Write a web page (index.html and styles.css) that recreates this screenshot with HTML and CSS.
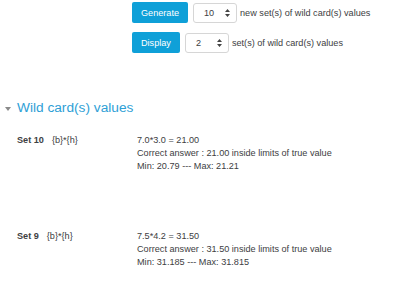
FILE: index.html
```html
<!DOCTYPE html>
<html>
<head>
<meta charset="utf-8">
<link rel="stylesheet" href="styles.css">
</head>
<body>
<div class="form">
  <div class="frow">
    <button class="btn">Generate</button>
    <div class="select"><span>10</span><svg class="arr" width="5" height="8" viewBox="0 0 5 8"><path d="M2.5 0 L5 3 L0 3 Z M0 5 L5 5 L2.5 8 Z" fill="#444"/></svg></div>
    <span class="flabel">new set(s) of wild card(s) values</span>
  </div>
  <div class="frow">
    <button class="btn">Display</button>
    <div class="select"><span>2</span><svg class="arr" width="5" height="8" viewBox="0 0 5 8"><path d="M2.5 0 L5 3 L0 3 Z M0 5 L5 5 L2.5 8 Z" fill="#444"/></svg></div>
    <span class="flabel">set(s) of wild card(s) values</span>
  </div>
</div>
<h3 class="section"><span class="caret"></span>Wild card(s) values</h3>
<div class="sets">
  <div class="set">
    <div class="setlabel"><b>Set 10</b>{b}*{h}</div>
    <div class="setvals">
      <div>7.0*3.0 = 21.00</div>
      <div>Correct answer : 21.00 inside limits of true value</div>
      <div>Min: 20.79 --- Max: 21.21</div>
    </div>
  </div>
  <div class="set">
    <div class="setlabel"><b>Set 9</b>{b}*{h}</div>
    <div class="setvals">
      <div>7.5*4.2 = 31.50</div>
      <div>Correct answer : 31.50 inside limits of true value</div>
      <div>Min: 31.185 --- Max: 31.815</div>
    </div>
  </div>
</div>
</body>
</html>
```
FILE: styles.css
```css
html, body {
  margin: 0;
  padding: 0;
  background: #fff;
}
body {
  font-family: "Liberation Sans", Arial, sans-serif;
  font-size: 9.15px;
  color: #3d4042;
  width: 400px;
  height: 286px;
  overflow: hidden;
}
.form {
  padding: 2px 0 0 132px;
  display: flex;
  flex-direction: column;
  gap: 9px;
}
.frow {
  display: flex;
  align-items: center;
  height: 21px;
}
.btn {
  font-family: inherit;
  font-size: 9.15px;
  color: #fff;
  background: #0fa0d8;
  border: none;
  border-radius: 2px;
  height: 21px;
  padding: 0 9px;
  margin: 0 5px 0 0;
}
.select {
  box-sizing: border-box;
  width: 44px;
  height: 20px;
  border: 1px solid #d6d6d6;
  border-radius: 3px;
  display: flex;
  align-items: center;
  justify-content: space-between;
  padding: 0 6px 0 10px;
  margin-right: 3px;
}
.arr {
  display: block;
}
.flabel {
  white-space: nowrap;
}
.section {
  margin: 47px 0 0 0;
  font-size: 13.7px;
  font-weight: normal;
  color: #2ea0d6;
  line-height: 16px;
  display: flex;
  align-items: center;
  padding-left: 5px;
}
.caret {
  width: 0;
  height: 0;
  border-left: 3px solid transparent;
  border-right: 3px solid transparent;
  border-top: 4px solid #8a8a8a;
  margin-right: 6px;
  margin-top: 1px;
}
.sets {
  padding: 18px 0 0 17px;
  display: flex;
  flex-direction: column;
  gap: 57px;
}
.set {
  display: grid;
  grid-template-columns: 120px 1fr;
  line-height: 13px;
}
.setlabel b {
  font-weight: bold;
  margin-right: 8px;
}
```
